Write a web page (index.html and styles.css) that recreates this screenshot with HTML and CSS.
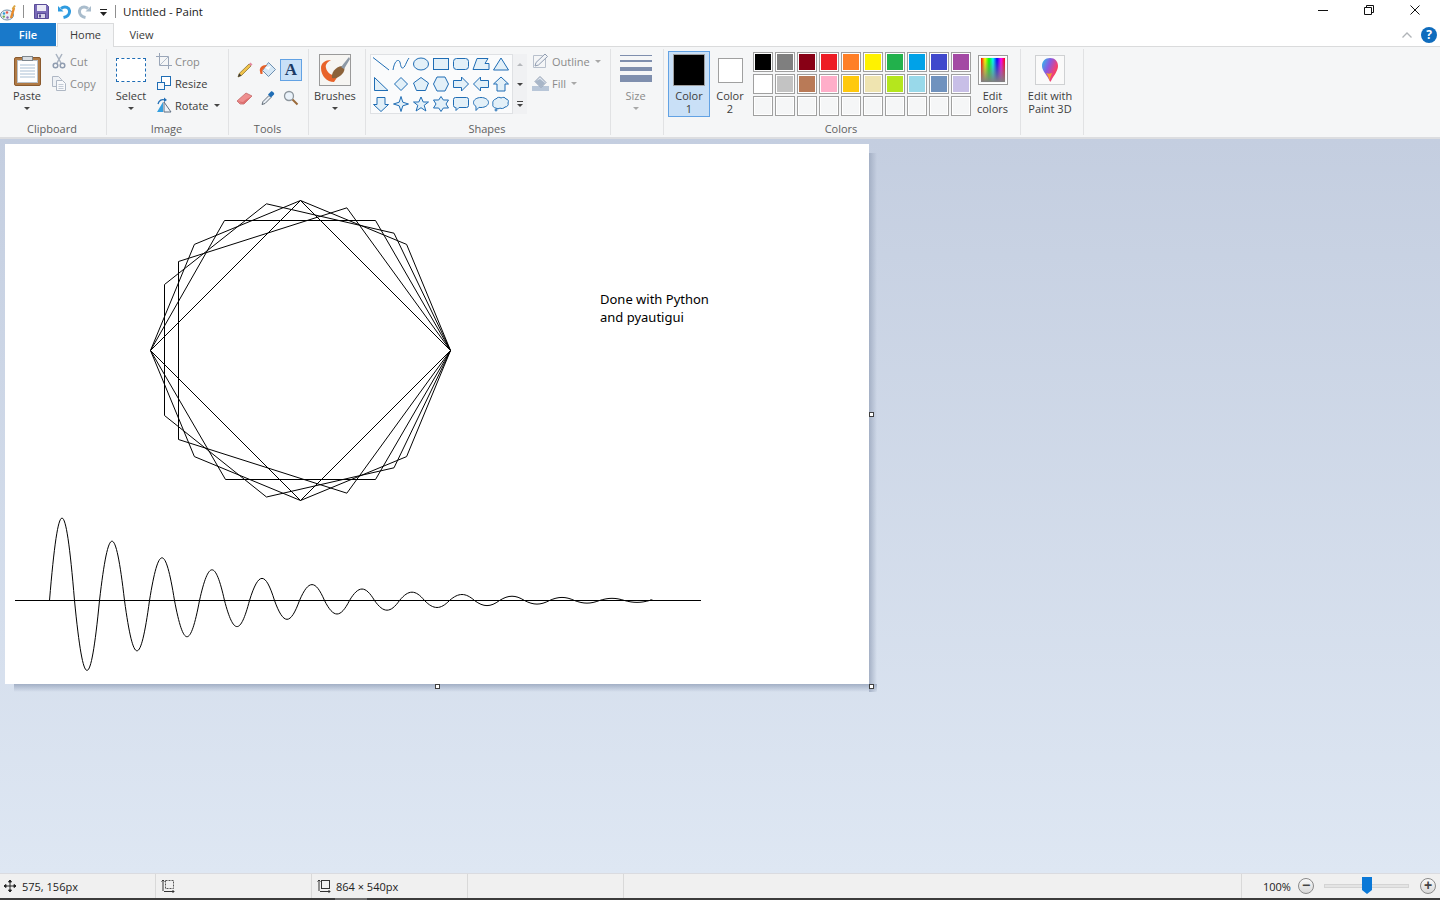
FILE: index.html
```html
<!DOCTYPE html>
<html lang="en">
<head>
<meta charset="utf-8">
<title>Untitled - Paint</title>
<link rel="stylesheet" href="styles.css">
</head>
<body>
<div class="app">
  <header class="titlebar">
    <svg class="app-icon" width="17" height="17" viewBox="0 0 17 17"><ellipse cx="7" cy="11" rx="6.5" ry="5" fill="#e8eef2" stroke="#6f8ea6"/><circle cx="4" cy="9.5" r="1.2" fill="#2f9fd8"/><circle cx="7" cy="8.5" r="1.2" fill="#e2574c"/><circle cx="3.8" cy="12.6" r="1.2" fill="#6ab04c"/><circle cx="7.5" cy="13.5" r="1.2" fill="#8a6bb5"/><path d="M11 14 L14 4" stroke="#e88a2a" stroke-width="2.4"/><path d="M12.5 5 L15 1.5" stroke="#d9a441" stroke-width="2"/></svg>
    <span class="qat-sep first"></span>
    <svg class="qat-save" width="15" height="15" viewBox="0 0 15 15"><path d="M.5.5h12l2 2v12H.5z" fill="#7a6bb8" stroke="#5a4c98"/><rect x="3" y="1" width="9" height="6" fill="#eceaf6"/><rect x="3.500" y="9.500" width="8" height="5" fill="#d8d5ea" stroke="#5a4c98"/><rect x="5" y="10.500" width="2" height="3" fill="#5a4c98"/></svg>
    <svg class="qat-undo" width="14" height="15" viewBox="0 0 14 15"><path d="M1 2 V7.500 H6.500 Z" fill="#2e9be0"/><path d="M4 4.500 C8 1.500 13 3.500 12.500 8 C12.300 10.800 9.800 12.800 6.500 13.500" fill="none" stroke="#2e9be0" stroke-width="3"/></svg>
    <svg class="qat-redo" width="14" height="15" viewBox="0 0 14 15"><path d="M13 2 V7.500 H7.500 Z" fill="#a9bccc"/><path d="M10 4.500 C6 1.500 1 3.500 1.500 8 C1.700 10.800 4.200 12.800 7.500 13.500" fill="none" stroke="#a9bccc" stroke-width="3"/></svg>
    <svg class="qat-more" width="7" height="7" viewBox="0 0 7 7"><rect width="7" height="1" fill="#222"/><path d="M0 3h7L3.500 7z" fill="#222"/></svg>
    <span class="qat-sep second"></span>
    <span class="window-title">Untitled - Paint</span>
    <div class="win-controls">
      <svg width="10" height="10" viewBox="0 0 10 10"><rect y="5" width="10" height="1" fill="#111"/></svg>
      <svg width="10" height="10" viewBox="0 0 10 10"><path d="M.5 2.500h7v7h-7zM2.500 2.500v-2h7v7h-2" fill="none" stroke="#111"/></svg>
      <svg width="10" height="10" viewBox="0 0 10 10"><path d="M.5.500l9 9M9.500.500l-9 9" stroke="#111"/></svg>
    </div>
  </header>

  <nav class="tabs">
    <span class="tab file">File</span>
    <span class="tab home">Home</span>
    <span class="tab view">View</span>
    <div class="tabs-right">
      <svg width="10" height="6" viewBox="0 0 10 6"><path d="M.5 5.500L5 1l4.500 4.500" fill="none" stroke="#b0b4b8" stroke-width="1.300"/></svg>
      <span class="help">?</span>
    </div>
  </nav>

  <section class="ribbon">
    <div class="group clipboard">
      <div class="group-body">
        <div class="big-btn paste">
          <div class="big-icon"><svg width="27" height="31" viewBox="0 0 27 31"><rect x=".5" y="2.500" width="26" height="28" rx="1.500" fill="#b07a45" stroke="#8a5a2e"/><rect x="3.500" y="5.500" width="20" height="22" fill="#fff" stroke="#b8c0c8"/><path d="M6 10h15M6 13h15M6 16h15M6 19h15M6 22h15" stroke="#a9bfd4"/><rect x="8.500" y="1.500" width="10" height="4" fill="#d8dde2" stroke="#7d868e"/></svg></div>
          <div class="big-label">Paste</div>
          <i class="arrow"></i>
        </div>
        <div class="small-list">
          <div class="small-row off"><svg width="16" height="16" viewBox="0 0 16 16"><path d="M5 1l5 9M11 1L6 10" stroke="#a8b2c0" stroke-width="1.500" fill="none"/><circle cx="4.500" cy="12.500" r="2.300" fill="none" stroke="#8f9cb0" stroke-width="1.500"/><circle cx="11.500" cy="12.500" r="2.300" fill="none" stroke="#8f9cb0" stroke-width="1.500"/></svg><span>Cut</span></div>
          <div class="small-row off"><svg width="16" height="16" viewBox="0 0 16 16"><path d="M1.500 1.500h6l3 3v7h-9z" fill="#eef1f5" stroke="#aeb7c4"/><path d="M5.500 5.500h6l3 3v7h-9z" fill="#f8f9fb" stroke="#aeb7c4"/><path d="M7.500 9.500h5M7.500 11.500h5M7.500 13.500h5" stroke="#c3cbd6"/></svg><span>Copy</span></div>
        </div>
      </div>
      <div class="group-label">Clipboard</div>
    </div>

    <div class="group image">
      <div class="group-body">
        <div class="big-btn select">
          <div class="big-icon"><span class="select-box"></span></div>
          <div class="big-label">Select</div>
          <i class="arrow"></i>
        </div>
        <div class="small-list">
          <div class="small-row off"><svg width="16" height="16" viewBox="0 0 16 16"><path d="M3.500 0v12.500H16M0 3.500h12.500V16" fill="none" stroke="#9aa6b8"/><path d="M3.500 12.500l9-9" stroke="#b5bfcc"/></svg><span>Crop</span></div>
          <div class="small-row"><svg width="16" height="16" viewBox="0 0 16 16"><rect x="5.500" y="1.500" width="9" height="9" fill="#fff" stroke="#1f6db5"/><rect x="1.500" y="7.500" width="7" height="7" fill="#f4f8fc" stroke="#1f6db5"/></svg><span>Resize</span></div>
          <div class="small-row"><svg width="16" height="16" viewBox="0 0 16 16"><path d="M8 15V5l7 10z" fill="#eef3f8" stroke="#5f6f83"/><path d="M7 15H1L7 5z" fill="#35a0e0"/><path d="M2 7C3 3 6 2 9 3" fill="none" stroke="#1f6db5" stroke-width="1.300"/><path d="M8 .500l3 2.500-3 2z" fill="#1f6db5"/></svg><span>Rotate</span><i class="arrow inline"></i></div>
        </div>
      </div>
      <div class="group-label">Image</div>
    </div>

    <div class="group tools">
      <div class="group-body">
        <div class="tool-grid">
          <div class="tool"><svg width="16" height="16" viewBox="0 0 16 16"><path d="M1 15l1.200-3.500L12 2l2 2-9.500 9.500z" fill="#f0c24a" stroke="#7f6a2a" stroke-width=".7"/><path d="M12 2l1.500-1.500 2 2L14 4z" fill="#e58aa0"/><path d="M1 15l1.200-3.500 2.300 2z" fill="#3a3a3a"/></svg></div>
          <div class="tool"><svg width="18" height="18" viewBox="0 0 18 18"><path d="M9.500 1.500l7 7-7 7-6-6z" fill="#d6e8f6" stroke="#6e8fb0"/><path d="M6 6.500l6-1.500-2.500 4z" fill="#fff"/><path d="M1 10.500C0 7 3 3.500 8 4L3.500 9v4H1.500z" fill="#e8622a"/></svg></div>
          <div class="tool on"><span class="tool-a">A</span></div>
          <div class="tool"><svg width="17" height="15" viewBox="0 0 17 15"><path d="M1 10l9-8 6 3-8 8H4z" fill="#ef8f8f" stroke="#c06a6a" stroke-width=".8"/><path d="M1 10l6 3 1 0 8-8-6 3.500-3 2.500z" fill="#dc6f6f"/></svg></div>
          <div class="tool"><svg width="16" height="16" viewBox="0 0 16 16"><path d="M2 14.500l1-3L9 5.500l2 2-6 6z" fill="#e8eef4" stroke="#55606c" stroke-width=".9"/><path d="M8 4.500l3-3c1-1 4 2 3 3l-3 3z" fill="#1f6db5"/></svg></div>
          <div class="tool"><svg width="16" height="16" viewBox="0 0 16 16"><circle cx="6" cy="6" r="4.500" fill="#eaf2fa" stroke="#8d969e" stroke-width="1.300"/><path d="M9.500 9.500l5 5" stroke="#9a6a3a" stroke-width="2"/></svg></div>
        </div>
      </div>
      <div class="group-label">Tools</div>
    </div>

    <div class="group brushes">
      <div class="group-body">
        <div class="big-btn brush">
          <div class="big-icon"><svg width="32" height="32" viewBox="0 0 32 32"><rect x=".5" y=".5" width="31" height="31" fill="#f6f5f2" stroke="#9a9a9a"/><path d="M2 14c0-5 4-8 10-8-3 2-6 4-5 8 1 5 6 8 12 8l-4 6C8 28 2 22 2 14z" fill="#e8632a"/><path d="M13 24c-1-5 3-11 10-12 3 1 3 4 1 7-3 4-7 6-11 5z" fill="#8c6239"/><path d="M22 13l8-10 1 2-6 10z" fill="#8d99a6"/></svg></div>
          <div class="big-label">Brushes</div>
          <i class="arrow"></i>
        </div>
      </div>
      <div class="group-label"></div>
    </div>

    <div class="group shapes">
      <div class="group-body">
        <div class="gallery">
          <div class="gallery-grid">
            <svg class="shape" width="18" height="16" viewBox="0 0 18 16"><path d="M1 1.500l16 12.500"/></svg>
            <svg class="shape" width="18" height="16" viewBox="0 0 18 16"><path class="nofill" d="M1 14C2 8 4 4 6.500 4.500S8 12 10.500 12 14 6 17 2"/></svg>
            <svg class="shape" width="18" height="16" viewBox="0 0 18 16"><ellipse cx="9" cy="8" rx="7.500" ry="6"/></svg>
            <svg class="shape" width="18" height="16" viewBox="0 0 18 16"><rect x="1.500" y="2.500" width="15" height="11"/></svg>
            <svg class="shape" width="18" height="16" viewBox="0 0 18 16"><rect x="1.500" y="2.500" width="15" height="11" rx="3"/></svg>
            <svg class="shape" width="18" height="16" viewBox="0 0 18 16"><path d="M1 13.500L5 2.500h11l-3 5h4v6z"/></svg>
            <svg class="shape" width="18" height="16" viewBox="0 0 18 16"><path d="M9 2L16.500 14H1.500z"/></svg>
            <svg class="shape" width="18" height="16" viewBox="0 0 18 16"><path d="M2.500 1.500L16 14.500H2.500z"/></svg>
            <svg class="shape" width="18" height="16" viewBox="0 0 18 16"><path d="M9 1.500L15.500 8 9 14.500 2.500 8z"/></svg>
            <svg class="shape" width="18" height="16" viewBox="0 0 18 16"><path d="M9 1.500L16.500 7l-3 7.500h-9L1.500 7z"/></svg>
            <svg class="shape" width="18" height="16" viewBox="0 0 18 16"><path d="M5 1h8l3.500 7-3.500 7H5L1.500 8z"/></svg>
            <svg class="shape" width="18" height="16" viewBox="0 0 18 16"><path d="M1.500 4.500h8v-3.500l7 7-7 7v-3.500h-8z"/></svg>
            <svg class="shape" width="18" height="16" viewBox="0 0 18 16"><path d="M16.500 4.500h-8v-3.500l-7 7 7 7v-3.500h8z"/></svg>
            <svg class="shape" width="18" height="16" viewBox="0 0 18 16"><path d="M9 1l7.500 7h-3.500v7H5V8H1.500z"/></svg>
            <svg class="shape" width="18" height="16" viewBox="0 0 18 16"><path d="M9 15.500L1.500 8.500H5v-7h8v7h3.500z"/></svg>
            <svg class="shape" width="18" height="16" viewBox="0 0 18 16"><path d="M9 .5l1.800 5.700L16.500 8l-5.700 1.800L9 15.500l-1.800-5.700L1.500 8l5.700-1.800z"/></svg>
            <svg class="shape" width="18" height="16" viewBox="0 0 18 16"><path d="M9 1l2.200 5h5.300l-4.300 3.300 1.700 5.700L9 11.700 4.100 15l1.700-5.700L1.500 6h5.300z"/></svg>
            <svg class="shape" width="18" height="16" viewBox="0 0 18 16"><path d="M9 .5l2.300 3.500h5.200l-2.500 4 2.500 4h-5.200L9 15.500 6.700 12H1.500L4 8 1.500 4h5.200z"/></svg>
            <svg class="shape" width="18" height="16" viewBox="0 0 18 16"><path d="M3.500 1.500h11a2 2 0 0 1 2 2v6a2 2 0 0 1-2 2H7l-3 3v-3h-.5a2 2 0 0 1-2-2v-6a2 2 0 0 1 2-2z"/></svg>
            <svg class="shape" width="18" height="16" viewBox="0 0 18 16"><path d="M9 1.500c4.200 0 7.500 2.200 7.500 5s-3.300 5-7.500 5c-.7 0-1.300 0-2-.2L4 14.500v-4C2.500 9.500 1.500 8.100 1.500 6.500c0-2.800 3.300-5 7.500-5z"/></svg>
            <svg class="shape" width="18" height="16" viewBox="0 0 18 16"><path d="M4 3c1-2 4-2 5-1 2-1 4-1 5 1 2 0 3 2 2 4 1 2-1 4-3 4-1 1.500-4 2-5 1-1 1-3 1-4 0-2 0-4-2-3-4-1-2 1-5 3-5z"/><circle cx="4" cy="14" r="1"/></svg>
          </div>
          <div class="gallery-scroll">
            <span class="scroll-btn"><i class="tri up"></i></span>
            <span class="scroll-btn"><i class="tri dark"></i></span>
            <span class="scroll-btn more"><b></b><i class="tri dark"></i></span>
          </div>
        </div>
        <div class="small-list outline-list">
          <div class="small-row off"><svg width="17" height="16" viewBox="0 0 17 16"><path d="M1.500 2.500h9M1.500 2.500v12h12v-9" fill="none" stroke="#b8c0cc"/><path d="M3 13l1-3.500L13 1l2.500 2.500L6.500 12z" fill="#f2f4f7" stroke="#8f9cb0"/></svg><span>Outline</span><i class="arrow inline pale"></i></div>
          <div class="small-row off"><svg width="17" height="16" viewBox="0 0 17 16"><rect x="0" y="11" width="17" height="5" fill="#b8c6d8"/><path d="M8 1.500l6 6-5 5-6-6z" fill="#dfe6ef" stroke="#8f9cb0"/><path d="M3 6.500L8 4l5 4-4 4.500z" fill="#a8b6c8"/></svg><span>Fill</span><i class="arrow inline pale"></i></div>
        </div>
      </div>
      <div class="group-label">Shapes</div>
    </div>

    <div class="group size">
      <div class="group-body">
        <div class="big-btn size-btn off">
          <div class="big-icon"><svg width="32" height="32" viewBox="0 0 32 32"><rect y="1" width="32" height="1" fill="#7f8fae"/><rect y="6" width="32" height="2" fill="#7f8fae"/><rect y="13" width="32" height="4" fill="#7f8fae"/><rect y="21" width="32" height="7" fill="#7f8fae"/></svg></div>
          <div class="big-label">Size</div>
          <i class="arrow pale"></i>
        </div>
      </div>
      <div class="group-label"></div>
    </div>

    <div class="group colors">
      <div class="group-body">
        <div class="color-slot active">
          <span class="color-big"></span>
          <div class="big-label">Color<br>1</div>
        </div>
        <div class="color-slot second">
          <span class="color-small"></span>
          <div class="big-label">Color<br>2</div>
        </div>
        <div class="palette">
          <span class="swatch c01"></span><span class="swatch c02"></span><span class="swatch c03"></span><span class="swatch c04"></span><span class="swatch c05"></span><span class="swatch c06"></span><span class="swatch c07"></span><span class="swatch c08"></span><span class="swatch c09"></span><span class="swatch c10"></span>
          <span class="swatch c11"></span><span class="swatch c12"></span><span class="swatch c13"></span><span class="swatch c14"></span><span class="swatch c15"></span><span class="swatch c16"></span><span class="swatch c17"></span><span class="swatch c18"></span><span class="swatch c19"></span><span class="swatch c20"></span>
          <span class="swatch"></span><span class="swatch"></span><span class="swatch"></span><span class="swatch"></span><span class="swatch"></span><span class="swatch"></span><span class="swatch"></span><span class="swatch"></span><span class="swatch"></span><span class="swatch"></span>
        </div>
        <div class="big-btn edit-colors">
          <div class="big-icon"><span class="rainbow"><span class="rainbow-fade"></span></span></div>
          <div class="big-label">Edit<br>colors</div>
        </div>
      </div>
      <div class="group-label">Colors</div>
    </div>

    <div class="group paint3d">
      <div class="group-body">
        <div class="big-btn p3d">
          <div class="big-icon"><span class="p3d-box"><svg width="18" height="26" viewBox="0 0 18 26"><defs><linearGradient id="drop" x1="0" y1="0" x2="1" y2=".6"><stop offset="0" stop-color="#27c4ee"/><stop offset=".45" stop-color="#8a58e0"/><stop offset=".8" stop-color="#f0407a"/><stop offset="1" stop-color="#f2453d"/></linearGradient></defs><path d="M9 1c5 0 8 3.500 8 8 0 5-4 9-7 15-.5 1-1 1-1.300 0C7 19 1 14 1 9c0-4.500 3-8 8-8z" fill="url(#drop)"/><path d="M8.700 24c-.5-3-2-6-3.700-8 2 1 4 1 6 0-1 2.500-2 5-2.300 8z" fill="#f5a030"/></svg></span></div>
          <div class="big-label">Edit with<br>Paint 3D</div>
        </div>
      </div>
      <div class="group-label"></div>
    </div>
  </section>

  <main class="workspace">
    <div class="canvas">
      <span class="shadow-right"></span>
      <span class="shadow-bottom"></span>
      <svg class="drawing" width="864" height="540" viewBox="5 144 864 540">
        <polygon points="450.500,350.500 300.500,200.500 150.500,350.500 300.500,500.500"/>
        <polygon points="450.500,350.500 346.850,207.840 178.500,261.500 178.500,439.500 346.850,493.160"/>
        <polygon points="450.500,350.500 375.500,220.500 224.500,220.500 150.500,350.500 225.500,479.500 375.500,479.500"/>
        <polygon points="450.500,350.500 394,233.200 266.500,203.800 164.500,284.500 164.500,415.500 266.500,497 394,467.800"/>
        <polygon points="450.500,350.500 406.600,244.400 300.500,200.500 194.400,244.400 150.500,350.500 194.400,456.600 300.500,500.500 406.600,456.600"/>
        <path class="axis" d="M15 600.500H701"/>
        <path class="wave" d="M49.500 600.500c9.100 -109.900 15.900 -109.900 25 0c9.100 93.200 15.900 93.200 25 0c9.100 -79.100 15.900 -79.100 25 0c9.100 67.100 15.900 67.100 25 0c9.100 -56.900 15.900 -56.900 25 0c9.100 48.300 15.900 48.300 25 0c9.100 -40.900 15.900 -40.900 25 0c9.100 34.800 15.900 34.800 25 0c9.100 -29.500 15.900 -29.500 25 0c9.100 25.100 15.900 25.100 25 0c9.100 -21.200 15.900 -21.200 25 0c9.100 18 15.900 18 25 0c9.100 -15.300 15.900 -15.300 25 0c9.100 12.900 15.900 12.900 25 0c9.100 -11.100 15.900 -11.100 25 0c9.100 9.300 15.900 9.300 25 0c9.100 -8 15.900 -8 25 0c9.100 6.800 15.900 6.800 25 0c9.100 -5.700 15.900 -5.700 25 0c9.100 4.800 15.900 4.800 25 0c9.100 -4.100 15.900 -4.100 25 0c9.100 3.500 15.900 3.500 25 0c9.100 -2.900 15.900 -2.900 25 0c9.100 2.500 15.900 2.500 25 0c1 -.8 2 -.8 3 -.5"/>
      </svg>
      <div class="canvas-text">Done with Python<br>and pyautigui</div>
      <span class="handle h-right"></span>
      <span class="handle h-bottom"></span>
      <span class="handle h-corner"></span>
    </div>
  </main>

  <footer class="status">
    <div class="status-cell pos"><svg width="12" height="12" viewBox="0 0 12 12"><path d="M6 0v12M0 6h12M6 0L4.500 2h3zM6 12l-1.500-2h3zM0 6l2-1.500v3zM12 6l-2-1.500v3z" stroke="#222" stroke-width="1" fill="#222"/></svg><span>575, 156px</span></div>
    <div class="status-cell sel"><svg width="14" height="14" viewBox="0 0 14 14"><path d="M2 12V1M.5 2.500L2 1l1.500 1.500M3 12.500h10M11.500 11l1.500 1.500-1.500 1.500" fill="none" stroke="#333"/><rect x="4.500" y="1.500" width="8" height="8" fill="none" stroke="#555" stroke-dasharray="2 1"/></svg></div>
    <div class="status-cell dim"><svg width="14" height="14" viewBox="0 0 14 14"><path d="M2 12V1M.5 2.500L2 1l1.500 1.500M3 12.500h10M11.500 11l1.500 1.500-1.500 1.500" fill="none" stroke="#333"/><rect x="4.500" y="1.500" width="8" height="8" fill="none" stroke="#333"/></svg><span>864 × 540px</span></div>
    <div class="status-cell blank"></div>
    <div class="status-cell fill-cell"></div>
    <div class="zoom">
      <span class="zoom-pct">100%</span>
      <span class="zoom-btn">−</span>
      <div class="slider"><svg class="thumb" width="10" height="17" viewBox="0 0 10 17"><path d="M0 0h10v13l-5 4-5-4z" fill="#0a78d7"/></svg></div>
      <span class="zoom-btn">+</span>
    </div>
  </footer>
  <div class="taskbar"><span class="taskbar-item"></span></div>
</div>
</body>
</html>
```

FILE: styles.css
```css
* { box-sizing: border-box; }
html, body { margin: 0; height: 100%; }
body {
  font-family: "Open Sans", "Noto Sans", sans-serif;
  font-size: 11px;
  color: #3c3c3c;
  overflow: hidden;
}
svg { display: block; flex: none; }
.app { width: 1440px; height: 900px; display: flex; flex-direction: column; background: #fff; }

/* title bar */
.titlebar { height: 23px; display: flex; align-items: center; background: #fff; }
.app-icon { margin: 2px 0 0 0; }
.qat-sep { width: 1px; height: 13px; background: #8f8f8f; }
.qat-sep.first { margin-left: 6px; }
.qat-save { margin-left: 10px; }
.qat-undo { margin-left: 8px; }
.qat-redo { margin-left: 7px; }
.qat-more { margin: 2px 0 0 8px; }
.qat-sep.second { margin-left: 8px; }
.window-title { margin-left: 7px; font-size: 11.5px; color: #222; line-height: 23px; }
.win-controls { margin-left: auto; display: flex; gap: 36px; padding: 0 20px 4px 0; align-items: center; }

/* tabs */
.tabs { height: 24px; display: flex; align-items: stretch; background: #fff; border-bottom: 1px solid #dadbdc; }
.tab { display: flex; align-items: center; justify-content: center; font-size: 11px; }
.tab.file { width: 56px; background: #1979ca; color: #fff; font-weight: 600; }
.tab.home { width: 57px; margin-left: 1px; height: 24px; padding-bottom: 2px; background: #f5f6f7; border: 1px solid #dadbdc; border-bottom: 0; color: #3a3a3a; }
.tab.view { width: 55px; color: #3a3a3a; }
.tabs-right { margin-left: auto; display: flex; align-items: center; gap: 9px; padding-right: 3px; }
.help { width: 16px; height: 16px; border-radius: 50%; background: #0f6cbd; color: #fff; font: bold 12px/16px "Open Sans", sans-serif; text-align: center; }

/* ribbon */
.ribbon { height: 92px; padding-top: 2px; display: flex; background: #f5f6f7; border-bottom: 2px solid #dcdde0; }
.group { height: 86px; display: flex; flex-direction: column; border-right: 1px solid #e1e2e4; flex: none; }
.group-body { height: 73px; display: flex; align-items: flex-start; }
.group-label { height: 13px; padding-right: 2px; line-height: 13px; text-align: center; color: #5f5f5f; }
.clipboard { width: 107px; }
.image { width: 122px; }
.tools { width: 80px; }
.brushes { width: 57px; }
.shapes { width: 245px; }
.size { width: 53px; }
.colors { width: 357px; }
.paint3d { width: 63px; }

.big-btn { display: flex; flex-direction: column; align-items: center; padding-top: 5px; flex: none; }
.big-icon { height: 32px; width: 100%; display: flex; align-items: center; justify-content: center; }
.big-label { margin-top: 4px; line-height: 12.5px; text-align: center; }
.off .big-label { color: #8a8a8a; }
.arrow { display: block; width: 0; height: 0; margin-top: 4px; border: 3px solid transparent; border-top-color: #444; border-bottom: 0; }
.arrow.pale { border-top-color: #a8a8a8; }
.arrow.inline { margin: 1px 0 0 2px; }

.paste { width: 40px; margin-left: 7px; }
.select { width: 40px; margin-left: 4px; }
.brush { width: 52px; }
.size-btn { width: 49px; }
.edit-colors { width: 41px; margin-left: 1px; }
.p3d { width: 58px; }

.small-list { padding-top: 1px; display: flex; flex-direction: column; margin-left: 4px; }
.image .small-list { margin-left: 5px; }
.outline-list { margin-left: 5px; }
.small-row { height: 22px; display: flex; align-items: center; gap: 3px; }
.small-row.off span { color: #8a8a8a; }

.select-box { width: 30px; height: 24px; border: 1px dashed #1f6db5; background: #fff; }

.tool-grid { display: grid; grid-template-columns: repeat(3, 23px); grid-auto-rows: 22px; row-gap: 6px; padding: 10px 0 0 4px; }
.tool { display: flex; align-items: center; justify-content: center; }
.tool.on { background: #c9e0f7; border: 1px solid #62a2e4; margin-left: 1px; }
.tool-a { font: bold 17px/20px "Liberation Serif", serif; color: #1d3a66; }

.gallery { margin: 5px 0 0 4px; width: 157px; height: 60px; display: flex; background: #fafbfc; box-shadow: inset 0 0 0 1px #dfe1e4; }
.gallery-grid { width: 142px; padding-left: 1px; display: grid; grid-template-columns: repeat(7, 20px); grid-auto-rows: 20px; place-items: center; }
.shape { fill: #e3f0f8; stroke: #1f6db5; stroke-width: 1; }
.shape .nofill { fill: none; }
.gallery-scroll { width: 15px; border-left: 1px solid #dfe1e4; display: flex; flex-direction: column; }
.scroll-btn { flex: 1; display: flex; flex-direction: column; gap: 2px; align-items: center; justify-content: center; background: #f0f1f3; }
.scroll-btn b { display: block; width: 6px; height: 1px; background: #444; }
.tri { display: block; width: 0; height: 0; border: 3px solid transparent; border-top-color: #444; border-bottom: 0; }
.tri.up { border-top: 0; border-bottom: 3px solid #b5b8bc; }

.color-slot { width: 42px; height: 66px; margin-top: 2px; padding-top: 2px; display: flex; flex-direction: column; align-items: center; flex: none; border: 1px solid transparent; }
.color-slot.active { margin-left: 4px; background: #c9e0f7; border-color: #62a2e4; }
.color-slot.second { margin-left: -1px; }
.color-big { width: 32px; height: 32px; background: #000; border: 1px solid #a0a0a0; }
.color-small { width: 25px; height: 25px; margin: 4px 0 3px; background: #fff; border: 1px solid #a0a0a0; }
.palette { margin: 3px 0 0 2px; display: grid; grid-template-columns: repeat(10, 20px); grid-auto-rows: 20px; gap: 2px; flex: none; }
.swatch { display: block; border: 1px solid #a0a0a0; box-shadow: inset 0 0 0 1px #fff; background: #f5f6f7; }
.c01 { background: #000000; } .c02 { background: #7f7f7f; } .c03 { background: #880015; }
.c04 { background: #ed1c24; } .c05 { background: #ff7f27; } .c06 { background: #fff200; }
.c07 { background: #22b14c; } .c08 { background: #00a2e8; } .c09 { background: #3f48cc; }
.c10 { background: #a349a4; } .c11 { background: #ffffff; } .c12 { background: #c3c3c3; }
.c13 { background: #b97a57; } .c14 { background: #ffaec9; } .c15 { background: #ffc90e; }
.c16 { background: #efe4b0; } .c17 { background: #b5e61d; } .c18 { background: #99d9ea; }
.c19 { background: #7092be; } .c20 { background: #c8bfe7; }
.rainbow { display: block; width: 30px; height: 30px; border: 1px solid #9a9a9a; box-shadow: inset 0 0 0 1px #fff; padding: 2px; background: linear-gradient(90deg, #ff0000, #ffff00, #00ff00, #00ffff, #0000ff, #ff00ff, #ff0000) content-box; }
.rainbow-fade { display: block; width: 100%; height: 100%; background: linear-gradient(180deg, rgba(128,128,128,0) 0%, rgba(128,128,128,1) 100%); }
.p3d-box { width: 30px; height: 30px; display: flex; align-items: center; justify-content: center; background: #fafafa; border: 1px solid #cfd1d3; }

/* workspace */
.workspace { height: 734px; padding: 5px 0 0 5px; background: linear-gradient(180deg, #c4cee0 0%, #dee7f3 100%); }
.canvas { position: relative; width: 864px; height: 540px; background: #fff; }
.drawing { position: absolute; left: 0; top: 0; }
.drawing polygon, .drawing path { fill: none; stroke: #000; stroke-width: 1; }
.drawing .axis { shape-rendering: crispEdges; }
.canvas-text { position: absolute; left: 595px; top: 146px; font: 13px/18px "Noto Sans", sans-serif; color: #000; }
.shadow-right { position: absolute; left: 864px; top: 9px; width: 8px; height: 539px; background: linear-gradient(90deg, #a4b0c5, rgba(180,192,212,0)); }
.shadow-bottom { position: absolute; left: 9px; top: 540px; width: 863px; height: 8px; background: linear-gradient(180deg, #a2afc5, rgba(190,202,220,0)); }
.handle { position: absolute; width: 5px; height: 5px; background: #fff; border: 1px solid #404040; }
.h-right { left: 864px; top: 268px; }
.h-bottom { left: 430px; top: 540px; }
.h-corner { left: 864px; top: 540px; }

/* status bar */
.status { height: 25px; display: flex; align-items: center; background: #f0f0f0; border-top: 1px solid #dadbe0; color: #222; }
.status-cell { height: 100%; display: flex; align-items: center; border-right: 1px solid #d9d9d9; flex: none; }
.status-cell.pos { width: 156px; padding-left: 4px; gap: 6px; }
.status-cell.sel { width: 156px; padding-left: 5px; }
.status-cell.dim { width: 156px; padding-left: 5px; gap: 5px; }
.status-cell.blank { width: 156px; }
.status-cell.fill-cell { width: 618px; }
.zoom { flex: 1; display: flex; align-items: center; padding-left: 21px; }
.zoom-pct { width: 35px; }
.zoom-btn { width: 16px; height: 16px; border-radius: 50%; border: 1px solid #8a8a8a; background: linear-gradient(#fafafa, #d8d8d8); font: bold 14px/13px "Liberation Sans", sans-serif; text-align: center; color: #444; flex: none; }
.slider { position: relative; width: 85px; height: 4px; margin: 0 11px 0 10px; background: #e4e4e4; border: 1px solid #d4d4d4; }
.thumb { position: absolute; left: 37px; top: -8px; }
.taskbar { height: 2px; background: #3c3c3c; display: flex; }
.taskbar-item { width: 32px; height: 2px; margin-left: 335px; background: #6e6e6e; }
```
